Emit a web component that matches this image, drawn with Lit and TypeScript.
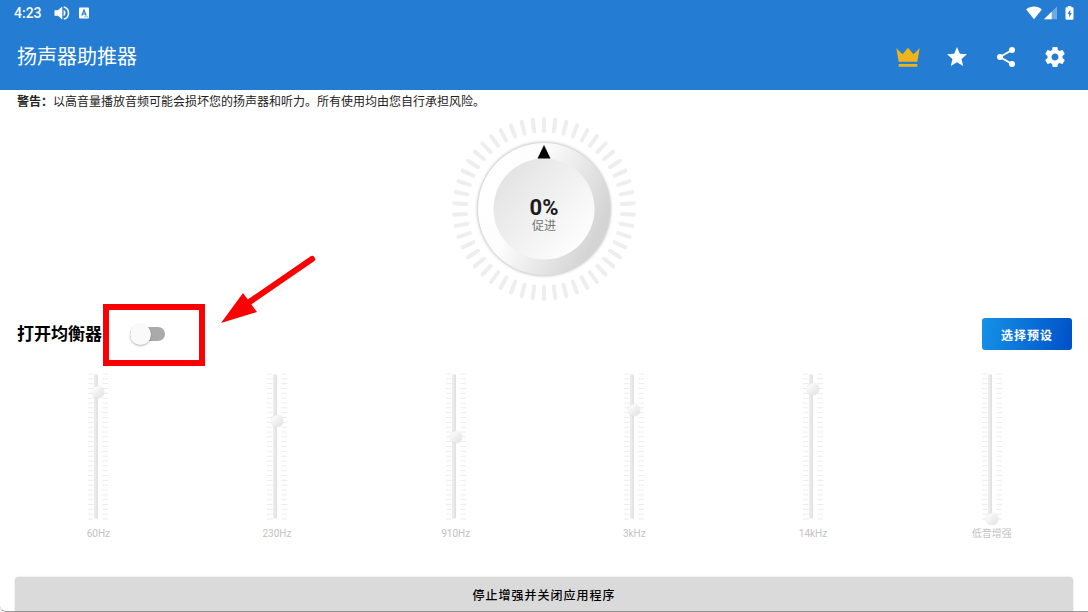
import { LitElement, html, svg, css } from "lit";
import { customElement, property, state } from "lit/decorators.js";

interface Band {
  id: string;
  label: string;
  value: number;
}

const BANDS: Band[] = [
  { id: "b60", label: "60Hz", value: 87 },
  { id: "b230", label: "230Hz", value: 67 },
  { id: "b910", label: "910Hz", value: 56 },
  { id: "b3k", label: "3kHz", value: 75 },
  { id: "b14k", label: "14kHz", value: 89 },
  { id: "bass", label: "低音增强", value: 0 },
];

@customElement("status-bar")
class StatusBar extends LitElement {
  static styles = css`
    :host {
      display: flex;
      align-items: center;
      justify-content: space-between;
      height: 26px;
      padding: 0 14px;
      color: #fff;
    }
    .group {
      display: flex;
      align-items: center;
    }
    .time {
      font-size: 14px;
      line-height: 16px;
      font-weight: 500;
      margin-right: 12px;
    }
    .speaker {
      margin-right: 9px;
    }
    .signal {
      margin: 0 8px 0 2px;
    }
    svg {
      display: block;
    }
  `;

  render() {
    return html`
      <div class="group">
        <span class="time">4:23</span>
        <svg class="speaker" width="16" height="16" viewBox="0 0 16 16" fill="#fff">
          <path d="M0.500 5.300h3.400L8.300 1.600v12.800L3.900 10.700H0.500z" />
          <path d="M9.600 4.800a3.600 3.600 0 0 1 0 6.400z" />
          <path d="M9.800 1.900a6.300 6.300 0 0 1 0 12.200" fill="none" stroke="#fff" stroke-width="1.500" />
        </svg>
        <svg width="10" height="12" viewBox="0 0 10 12">
          <rect y="0.500" width="10" height="11" rx="1" fill="#fff" />
          <path d="M2.800 8.600 5 3.200l2.200 5.400M3.600 7h2.800" fill="none" stroke="#247dd3" stroke-width="1.200" />
          <path d="M5.600 9.800h1M7.600 9.800h1" stroke="#247dd3" />
        </svg>
      </div>
      <div class="group">
        <svg width="16" height="14" viewBox="0 0 16 14">
          <path d="M0.200 3.400C4.600 -0.400 11.400 -0.400 15.800 3.400L8 13.300z" fill="#fff" />
        </svg>
        <svg class="signal" width="13" height="14" viewBox="0 0 13 14">
          <path d="M13 0.500V13.200H0z" fill="#fff" opacity="0.350" />
          <path d="M7.600 5.800V13.200H0z" fill="#fff" />
        </svg>
        <svg width="9" height="14" viewBox="0 0 9 14">
          <path d="M2.800 0h3.400v1.300H7.500q1 0 1 1v10.400q0 1-1 1h-6q-1 0-1-1V2.300q0-1 1-1h1.300z" fill="#fff" />
          <path d="M5.300 3.500 2.600 8h1.600v3.400L6.700 6.900H5.300z" fill="#247dd3" />
        </svg>
      </div>
    `;
  }
}

@customElement("boost-dial")
class BoostDial extends LitElement {
  @property({ type: Number }) value = 0;

  static styles = css`
    :host {
      display: grid;
      justify-items: center;
      align-items: center;
    }
    .face,
    .readout {
      grid-area: 1 / 1;
    }
    .face {
      display: block;
    }
    .readout {
      display: flex;
      flex-direction: column;
      align-items: center;
      padding-top: 12px;
    }
    .value {
      font-size: 22px;
      line-height: 22px;
      font-weight: 700;
      color: #1c1c1c;
    }
    .caption {
      font-size: 12px;
      line-height: 14px;
      color: #777;
    }
  `;

  render() {
    const ticks = Array.from({ length: 50 }, (_, i) => i * 7.2);
    return html`
      <svg class="face" width="184" height="184" viewBox="-92 -92 184 184">
        <defs>
          <linearGradient id="rim" x1="0.1" y1="0.320" x2="0.9" y2="0.680">
            <stop offset="0" stop-color="#fff" />
            <stop offset="0.3" stop-color="#fcfcfc" />
            <stop offset="1" stop-color="#d4d4d4" />
          </linearGradient>
          <linearGradient id="cap" x1="0.1" y1="0.2" x2="0.850" y2="0.850">
            <stop offset="0" stop-color="#e4e4e4" />
            <stop offset="1" stop-color="#fdfdfd" />
          </linearGradient>
          <filter id="soft" x="-10%" y="-10%" width="120%" height="120%">
            <feGaussianBlur stdDeviation="1.5" />
          </filter>
        </defs>
        ${ticks.map(
          (a) => svg`<line y1="-90" y2="-78" stroke="#eeeeee" stroke-width="4" stroke-linecap="round" transform="rotate(${a})" />`
        )}
        <circle r="67" fill="#ccc" filter="url(#soft)" />
        <circle r="66.500" fill="url(#rim)" stroke="#dadada" />
        <circle r="50.500" fill="url(#cap)" />
        <path d="M0 -64 6.500 -50.500H-6.500z" fill="#000" />
      </svg>
      <div class="readout">
        <span class="value">${this.value}%</span>
        <span class="caption">促进</span>
      </div>
    `;
  }
}

@customElement("eq-band")
class EqBand extends LitElement {
  @property() label = "";
  @property({ type: Number }) value = 0;

  static styles = css`
    :host {
      display: flex;
      flex-direction: column;
      align-items: center;
      min-width: 0;
    }
    .slot {
      display: grid;
      place-items: center;
    }
    .scale,
    .range {
      grid-area: 1 / 1;
    }
    .scale {
      display: block;
    }
    .range {
      appearance: none;
      writing-mode: vertical-lr;
      direction: rtl;
      width: 12px;
      height: 158px;
      margin: 0;
      background: transparent;
    }
    .range::-webkit-slider-runnable-track {
      width: 12px;
      background: transparent;
    }
    .range::-webkit-slider-thumb {
      appearance: none;
      width: 12px;
      height: 12px;
      border-radius: 50%;
      background: linear-gradient(135deg, #fafafa 20%, #e0e0e0);
      box-shadow: 0 0 1px 0 #bbb;
    }
    .label {
      font-size: 10px;
      line-height: 14px;
      margin-top: 2px;
      color: #c2c2c2;
      white-space: nowrap;
    }
  `;

  render() {
    const rows = Array.from({ length: 31 }, (_, i) => 1 + (i * 145) / 30);
    return html`
      <div class="slot">
        <svg class="scale" width="22" height="147" viewBox="0 0 22 147">
          ${rows.map((y) => svg`<path d="M1 ${y}h5.500M15.500 ${y}h5.500" stroke="#ececec" />`)}
          <rect x="7" y="1" width="4" height="145" rx="2" fill="#ebebeb" />
          <rect x="9.500" y="2" width="1.500" height="143" fill="#e1e1e1" />
        </svg>
        <input
          id="level"
          class="range"
          type="range"
          min="0"
          max="100"
          .value=${String(this.value)}
        />
      </div>
      <label class="label" for="level">${this.label}</label>
    `;
  }
}

@customElement("app-root")
class AppRoot extends LitElement {
  @state() private enabled = false;

  static styles = css`
    :host {
      display: flex;
      flex-direction: column;
      box-sizing: border-box;
      min-height: 100vh;
      background: #fff;
      border-bottom: 1px solid #999;
      border-bottom-left-radius: 6px;
      font-family: Roboto, "Noto Sans CJK SC", sans-serif;
      color: #222;
    }
    .top {
      background: #247dd3;
      color: #fff;
    }
    .appbar {
      display: flex;
      align-items: center;
      justify-content: space-between;
      height: 62px;
      padding: 0 21px 2px 17px;
    }
    .title {
      margin: 0;
      font-size: 20px;
      line-height: 28px;
      font-weight: 400;
    }
    .actions {
      display: flex;
      gap: 25px;
    }
    .action {
      display: block;
      width: 24px;
      height: 24px;
      padding: 0;
      border: 0;
      background: none;
      color: #fff;
    }
    .action svg {
      display: block;
      fill: currentColor;
    }
    .gold {
      color: #eeb41c;
    }
    .warning {
      margin: 0;
      padding: 4px 17px 7px;
      font-size: 12px;
      line-height: 16px;
    }
    .eqbar {
      position: relative;
      display: flex;
      align-items: center;
      height: 32px;
      margin-top: 17px;
      padding: 0 16px 0 17px;
    }
    .eqlabel {
      font-size: 17px;
      line-height: 24px;
      font-weight: 700;
      color: #000;
    }
    .switch {
      appearance: none;
      display: flex;
      align-items: center;
      width: 35px;
      height: 14px;
      margin: 0 0 0 28px;
      background: #aaa;
      border-radius: 7px;
    }
    .switch::before {
      content: "";
      flex: none;
      width: 21px;
      height: 21px;
      border-radius: 50%;
      background: #fafafa;
      box-shadow: 0 1px 2px rgba(0, 0, 0, 0.3);
    }
    .switch:checked {
      justify-content: flex-end;
    }
    .preset {
      margin-left: auto;
      width: 90px;
      height: 32px;
      padding: 0;
      border: 0;
      border-radius: 3px;
      background: linear-gradient(100deg, #1592e6, #0050c8);
      color: #fff;
      font: inherit;
      font-size: 12px;
      font-weight: 700;
      letter-spacing: 1px;
    }
    .callout {
      position: absolute;
      left: 100px;
      top: -66px;
      pointer-events: none;
    }
    .bands {
      display: grid;
      grid-template-columns: repeat(6, 1fr);
      padding: 0 7px 0 9px;
      margin: 17px 0 24px;
    }
    .stop {
      margin: auto 15px 0;
      height: 34px;
      padding: 0;
      border: 0;
      border-radius: 4px 4px 0 0;
      background: #dadada;
      box-shadow: 0 0 2px rgba(0, 0, 0, 0.2);
      color: #000;
      font: inherit;
      font-size: 12px;
      font-weight: 500;
      letter-spacing: 1px;
    }
  `;

  private toggle(e: Event) {
    this.enabled = (e.target as HTMLInputElement).checked;
  }

  render() {
    return html`
      <header class="top">
        <status-bar></status-bar>
        <div class="appbar">
          <h1 class="title">扬声器助推器</h1>
          <div class="actions">
            <button class="action gold" aria-label="高级版">
              <svg width="24" height="24" viewBox="0 0 24 24">
                <path d="M0.300 3.200 6.500 9.300 12 2.800l5.500 6.500L23.700 3.200 21.300 16.800H2.700zM2.700 19h18.600v2.800H2.700z" />
              </svg>
            </button>
            <button class="action" aria-label="评分">
              <svg width="24" height="24" viewBox="0 0 24 24">
                <path d="M12 17.270 18.180 21l-1.640-7.030L22 9.240l-7.190-.61L12 2 9.190 8.630 2 9.240l5.460 4.730L5.820 21z" />
              </svg>
            </button>
            <button class="action" aria-label="分享">
              <svg width="24" height="24" viewBox="0 0 24 24">
                <path d="M6 12 18 5M6 12l12 7" stroke="currentColor" stroke-width="2" />
                <circle cx="6" cy="12" r="3" />
                <circle cx="18" cy="5" r="3" />
                <circle cx="18" cy="19" r="3" />
              </svg>
            </button>
            <button class="action" aria-label="设置">
              <svg width="24" height="24" viewBox="0 0 24 24">
                <path d="M19.430 12.980c.04-.32.07-.64.07-.98s-.03-.66-.07-.98l2.110-1.650c.19-.15.24-.42.12-.64l-2-3.460c-.12-.22-.39-.3-.61-.22l-2.490 1c-.52-.4-1.080-.73-1.690-.98l-.38-2.650C14.460 2.180 14.250 2 14 2h-4c-.25 0-.46.18-.49.42l-.38 2.650c-.61.25-1.170.59-1.690.98l-2.490-1c-.23-.09-.49 0-.61.22l-2 3.460c-.13.22-.07.49.12.64l2.110 1.650c-.04.32-.07.65-.07.98s.03.66.07.98l-2.110 1.650c-.19.15-.24.42-.12.64l2 3.460c.12.22.39.3.61.22l2.490-1c.52.4 1.080.73 1.690.98l.38 2.650c.03.24.24.42.49.42h4c.25 0 .46-.18.49-.42l.38-2.650c.61-.25 1.170-.59 1.690-.98l2.490 1c.23.09.49 0 .61-.22l2-3.460c.12-.22.07-.49-.12-.64zM12 15.500c-1.930 0-3.500-1.570-3.500-3.500s1.570-3.500 3.500-3.500 3.500 1.570 3.500 3.500-1.570 3.500-3.500 3.500z" />
              </svg>
            </button>
          </div>
        </div>
      </header>

      <p class="warning"><b>警告：</b>以高音量播放音频可能会损坏您的扬声器和听力。所有使用均由您自行承担风险。</p>

      <boost-dial .value=${0}></boost-dial>

      <div class="eqbar">
        <label class="eqlabel" for="eq">打开均衡器</label>
        <input id="eq" class="switch" type="checkbox" role="switch" .checked=${this.enabled} @change=${this.toggle} />
        <button class="preset">选择预设</button>
        <svg class="callout" width="220" height="116" viewBox="0 0 220 116">
          <rect x="6" y="55" width="96" height="56" fill="none" stroke="#f80204" stroke-width="6" />
          <path d="M212 7 148 51" stroke="#f80204" stroke-width="6" stroke-linecap="round" />
          <path d="M121 71 143 41 157 60z" fill="#f80204" />
        </svg>
      </div>

      <div class="bands">
        ${BANDS.map((b) => html`<eq-band .label=${b.label} .value=${b.value}></eq-band>`)}
      </div>

      <button class="stop">停止增强并关闭应用程序</button>
    `;
  }
}
